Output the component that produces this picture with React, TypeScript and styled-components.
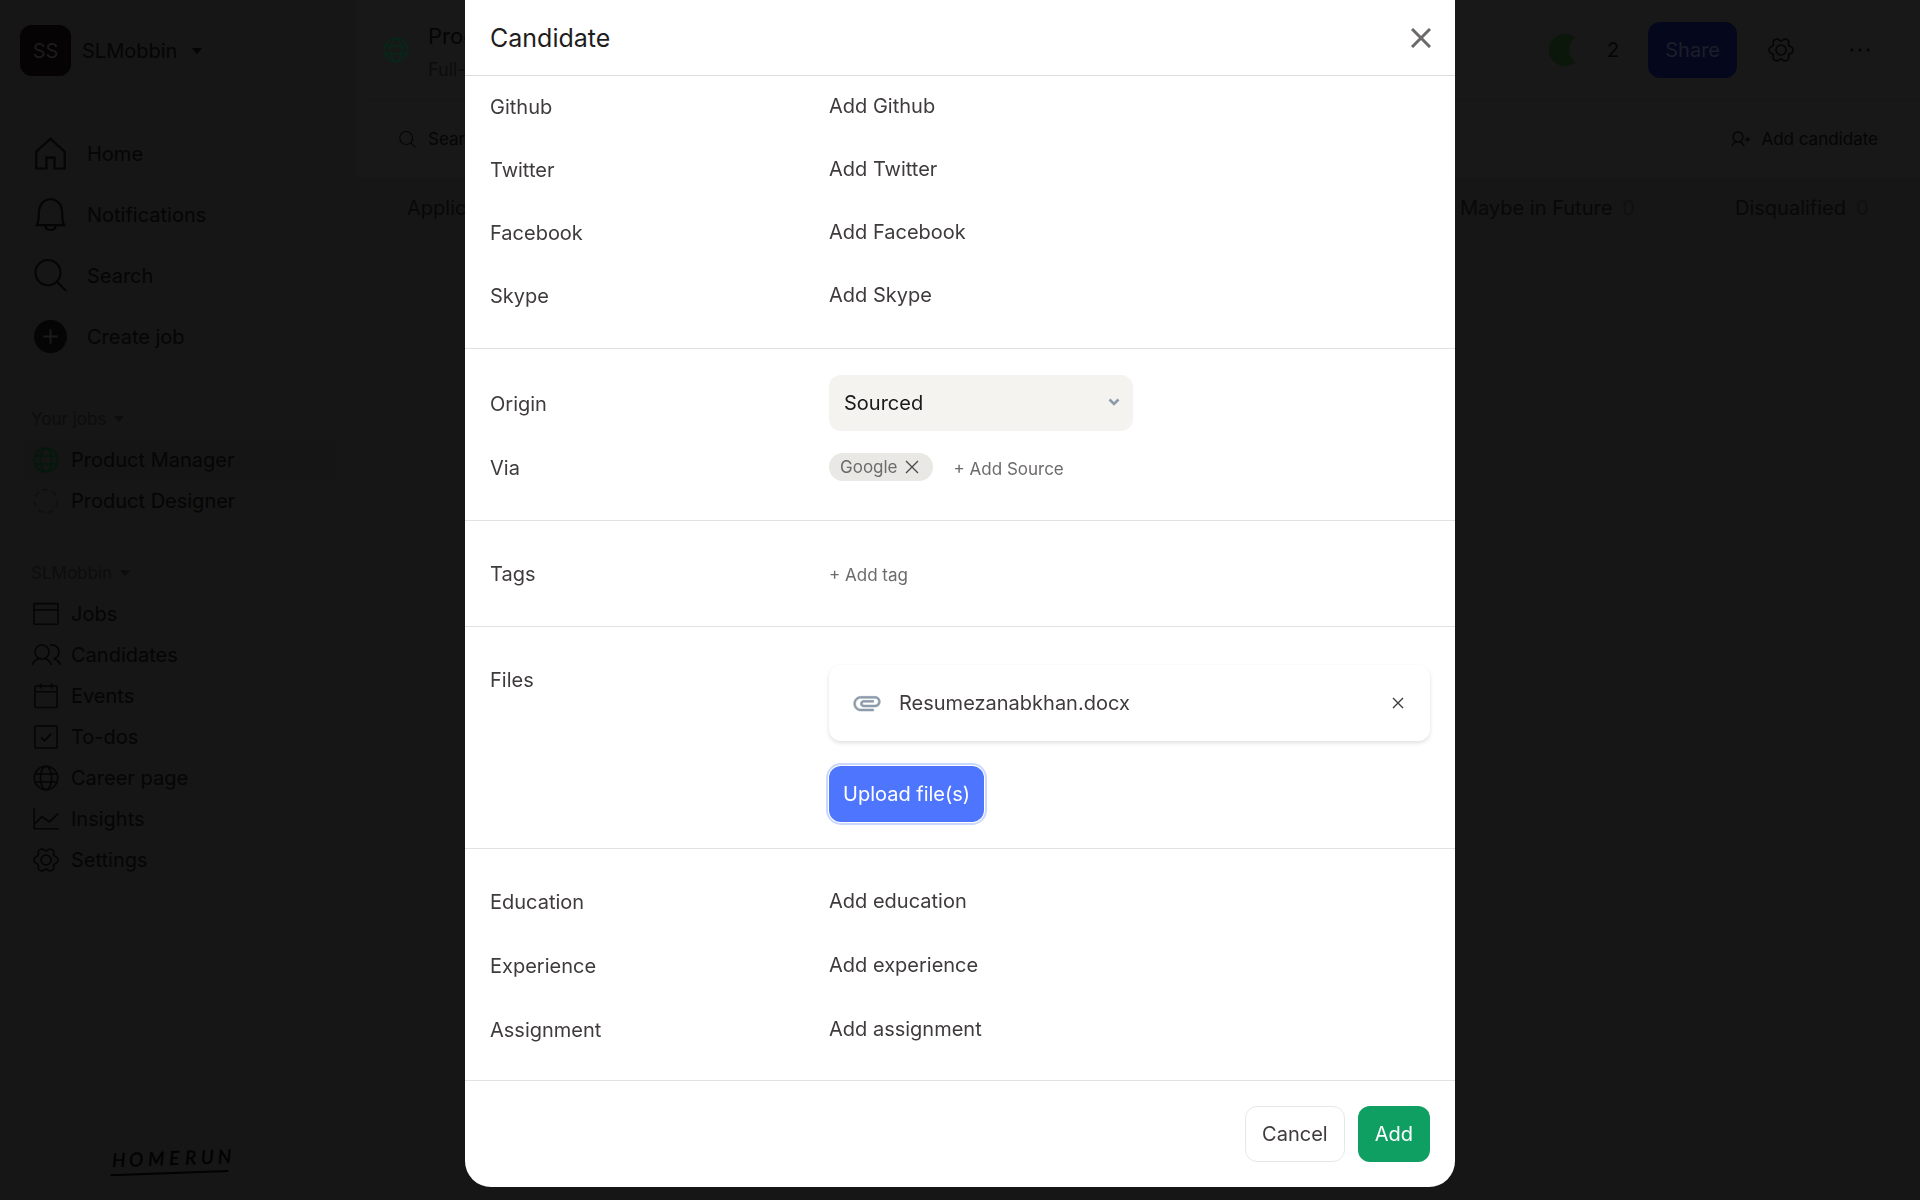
import React, { useState } from "react";
import styled, { createGlobalStyle, css } from "styled-components";

const GlobalStyle = createGlobalStyle`
  *, *::before, *::after { box-sizing: border-box; }
  body {
    margin: 0;
    background: #161616;
    color: #050505;
    font-family: Inter, "Liberation Sans", sans-serif;
    font-size: 20px;
    line-height: 24px;
    overflow: hidden;
  }
  button, select, input { font: inherit; color: inherit; }
  svg { display: block; flex: none; }
`;

/* ---------- shared ---------- */

const plainButton = css`
  border: 0;
  padding: 0;
  background: none;
  cursor: pointer;
  text-align: left;
`;

const PlainButton = styled.button`
  ${plainButton}
  display: flex;
  align-items: center;
`;

/* ---------- page behind the dialog ---------- */

const Page = styled.div`
  display: grid;
  grid-template-columns: 356px 1fr;
  min-height: 100vh;
`;

const Sidebar = styled.aside`
  display: flex;
  flex-direction: column;
  padding: 25px 20px 20px;
`;

const Workspace = styled.button`
  ${plainButton}
  display: flex;
  align-items: center;
  gap: 11px;
  margin-bottom: 47px;
`;

const WorkspaceBadge = styled.span`
  display: grid;
  place-items: center;
  width: 51px;
  height: 51px;
  border-radius: 12px;
  background: #050304;
  color: #1c1c1c;
`;

const Caret = styled.span`
  margin-left: 4px;
  border: 5px solid transparent;
  border-top: 6px solid currentColor;
  border-bottom: 0;
`;

const MainLink = styled.a`
  display: flex;
  align-items: center;
  gap: 20px;
  height: 61px;
  padding-left: 14px;
  color: #050505;
  text-decoration: none;
`;

const GroupTitle = styled.button`
  ${plainButton}
  display: flex;
  align-items: center;
  gap: 4px;
  height: 40px;
  margin-top: 32px;
  padding-left: 11px;
  font-size: 17px;
  color: #0d0d0d;
`;

const SubLink = styled.a<{ $active?: boolean }>`
  display: flex;
  align-items: center;
  gap: 12px;
  height: 41px;
  margin-left: 4px;
  padding-left: 9px;
  border-radius: 8px;
  background: ${(p) => (p.$active ? "#151515" : "transparent")};
  color: #050505;
  text-decoration: none;
`;

const SubIcon = styled.span<{ $color?: string }>`
  display: flex;
  justify-content: center;
  flex: none;
  width: 26px;
  color: ${(p) => p.$color || "inherit"};
`;

const Brand = styled.div`
  margin: auto 0 0 88px;
  color: #020202;
`;

const Main = styled.main`
  min-width: 0;
`;

const TopPanel = styled.header`
  background: #181818;
  height: 177px;
`;

const JobBar = styled.div`
  display: flex;
  align-items: center;
  height: 101px;
  margin-left: 12px;
  padding: 0 46px 0 15px;
  border-bottom: 1px solid #161616;
`;

const JobTitle = styled.div`
  display: flex;
  flex-direction: column;
  gap: 10px;
  margin-left: 19px;
  padding-top: 6px;
  font-size: 22px;
`;

const JobMeta = styled.span`
  font-size: 18px;
  color: #0c0c0c;
`;

const JobActions = styled.div`
  display: flex;
  align-items: center;
  margin-left: auto;
`;

const Avatar = styled.span<{ $color: string }>`
  width: 32px;
  height: 32px;
  border-radius: 50%;
  background: ${(p) => p.$color};
  & + & { margin-left: -12px; }
`;

const MemberCount = styled.span`
  margin: 0 29px 0 6px;
`;

const ShareButton = styled.button`
  ${plainButton}
  height: 56px;
  padding: 0 17px;
  border-radius: 12px;
  background: #05081c;
  color: #1c1e2a;
`;

const IconButton = styled.button`
  ${plainButton}
  display: grid;
  place-items: center;
  width: 28px;
  height: 44px;
`;

const GearSlot = styled.span`
  margin: 0 51px 0 30px;
`;

const ToolBar = styled.div`
  display: flex;
  align-items: center;
  justify-content: space-between;
  height: 76px;
  padding: 0 42px 0 43px;
  font-size: 17px;
`;

const SearchBox = styled.label`
  display: flex;
  align-items: center;
  gap: 12px;
`;

const SearchInput = styled.input`
  width: 200px;
  border: 0;
  padding: 0;
  background: none;
  outline: 0;
  &::placeholder { color: #050505; opacity: 1; }
`;

const AddCandidate = styled(PlainButton)`
  gap: 10px;
`;

const Stages = styled.div`
  display: grid;
  grid-template-columns: 1fr 275px 185px;
  padding: 19px 0 0 51px;
  color: #080808;
`;

const Stage = styled.div`
  display: flex;
  gap: 10px;
`;

const StageCount = styled.span`
  color: #101010;
`;

/* ---------- dialog ---------- */

const Overlay = styled.div`
  position: fixed;
  inset: 0;
  display: flex;
  justify-content: center;
  align-items: flex-start;
`;

const Dialog = styled.section`
  display: flex;
  flex-direction: column;
  width: 100%;
  max-width: 990px;
  max-height: calc(100vh - 13px);
  border-radius: 0 0 26px 26px;
  background: #fff;
  color: #3f3b3c;
`;

const DialogHeader = styled.header`
  display: flex;
  align-items: center;
  justify-content: space-between;
  flex: none;
  height: 76px;
  padding: 0 24px 0 25px;
  border-bottom: 1px solid #dedddc;
`;

const DialogTitle = styled.h2`
  margin: 0;
  font-size: 25px;
  line-height: 32px;
  font-weight: 400;
  color: #1f1d1d;
`;

const DialogBody = styled.div`
  flex: 1;
  min-height: 0;
  overflow-y: auto;
  scrollbar-width: none;
`;

const Section = styled.div<{ $top?: number; $bottom?: number; $gap?: number }>`
  display: flex;
  flex-direction: column;
  gap: ${(p) => p.$gap ?? 20}px;
  padding: ${(p) => p.$top ?? 30}px 25px ${(p) => p.$bottom ?? 31}px;
  & + & { border-top: 1px solid #e2e1e0; }
`;

const Row = styled.div`
  display: grid;
  grid-template-columns: 339px 1fr;
  align-items: center;
  min-height: 44px;
`;

const FilesRow = styled(Row)`
  align-items: start;
`;

const RowLabel = styled.label`
  padding-top: 2px;
  line-height: 42px;
`;

const AddLink = styled(PlainButton)`
  justify-self: start;
`;

const SmallLink = styled(PlainButton)`
  justify-self: start;
  padding-top: 3px;
  font-size: 17px;
  color: #6d6a6a;
`;

const SelectWrap = styled.div`
  position: relative;
  width: 304px;
  svg {
    position: absolute;
    right: 12px;
    top: 20px;
    pointer-events: none;
  }
`;

const Select = styled.select`
  appearance: none;
  width: 100%;
  height: 56px;
  padding: 0 15px;
  border: 0;
  border-radius: 12px;
  background: #f4f3ef;
  color: #1b1919;
  display: block;
`;

const Sources = styled.div`
  display: flex;
  align-items: center;
  gap: 21px;
`;

const Chip = styled.span`
  display: flex;
  align-items: center;
  gap: 7px;
  height: 28px;
  padding: 0 14px 0 11px;
  border-radius: 14px;
  background: #e9e8e5;
  font-size: 17px;
  color: #6d6a6a;
`;

const Files = styled.div`
  display: flex;
  flex-direction: column;
  align-items: flex-start;
  gap: 25px;
  padding-top: 8px;
`;

const FileCard = styled.div`
  display: flex;
  align-items: center;
  width: 100%;
  height: 76px;
  padding: 0 26px 0 22px;
  border-radius: 12px;
  box-shadow: 0 2px 4px rgba(0, 0, 0, 0.13);
`;

const FileName = styled.span`
  flex: 1;
  margin-left: 16px;
`;

const Button = styled.button<{ $kind: "primary" | "outline" | "success" }>`
  height: 56px;
  padding: 0 16px;
  border-radius: 12px;
  border: 1px solid transparent;
  cursor: pointer;
  color: #fff;
  ${(p) =>
    p.$kind === "primary" &&
    css`
      padding: 0 14px;
      background: #4e75fd;
      border: 0;
      box-shadow: 0 0 0 1px #fff, 0 0 0 3px #cbd8fe;
    `}
  ${(p) =>
    p.$kind === "outline" &&
    css`
      background: #fff;
      border-color: #e8e7e5;
      color: #3f3b3c;
    `}
  ${(p) => p.$kind === "success" && css`background: #0f9f63;`}
`;

const DialogFooter = styled.footer`
  display: flex;
  justify-content: flex-end;
  gap: 13px;
  flex: none;
  padding: 25px;
  border-top: 1px solid #e2e1e0;
`;

/* ---------- icons ---------- */

type IconProps = { size?: number; width?: number };

const Icon = ({ size = 26, width = 1.6, children }: IconProps & { children: React.ReactNode }) => (
  <svg width={size} height={size} viewBox="0 0 26 26" fill="none" stroke="currentColor" strokeWidth={width} aria-hidden="true">
    {children}
  </svg>
);

const Globe = (p: IconProps) => (
  <Icon {...p}>
    <circle cx="13" cy="13" r="11.7" />
    <ellipse cx="13" cy="13" rx="5.6" ry="11.7" />
    <path d="M2.2 9h21.6M2.2 17h21.6" />
  </Icon>
);

const gearPath =
  Array.from({ length: 72 }, (_, i) => {
    const a = (i * Math.PI) / 36;
    const wave = Math.cos(6 * a);
    const r = 11 + 1.5 * wave - 0.5 * wave * wave;
    return `${i ? "L" : "M"}${(13 + r * Math.cos(a)).toFixed(2)} ${(13 + r * Math.sin(a)).toFixed(2)}`;
  }).join("") + "Z";

const Gear = (p: IconProps) => (
  <Icon {...p}>
    <path d={gearPath} strokeLinejoin="round" />
    <circle cx="13" cy="13" r="5" />
  </Icon>
);

const Magnifier = (p: IconProps) => (
  <Icon {...p}>
    <circle cx="11" cy="10.7" r="9.9" />
    <path d="M18 18l7.4 7.2" />
  </Icon>
);

const House = () => (
  <Icon size={33} width={1.7}>
    <path d="M1.800 24.800V11.600L13 1.400l11.200 10.200v13.200h-8v-8.600H9.800v8.600z" />
  </Icon>
);

const Bell = () => (
  <Icon size={33} width={1.7}>
    <path d="M2.200 21.400c1.200-2 1.600-4.400 1.600-9.400 0-6.200 3.500-11 9.200-11s9.200 4.800 9.200 11c0 5 .4 7.400 1.600 9.400z" />
    <path d="M8.800 21.600c.4 2.500 2 3.700 4.200 3.700s3.800-1.200 4.200-3.700" />
  </Icon>
);

const PlusDisc = () => (
  <svg width={33} height={33} viewBox="0 0 32 32" aria-hidden="true">
    <circle cx="16" cy="16" r="16" fill="#050505" />
    <path d="M16 9v14M9 16h14" stroke="#1a1a1a" strokeWidth="2" />
  </svg>
);

const Dashed = () => (
  <Icon>
    <circle cx="13" cy="13" r="11.500" strokeDasharray="6 4" />
  </Icon>
);

const Window = () => (
  <Icon>
    <rect x="1" y="2.600" width="24" height="20.600" rx="1" />
    <path d="M1 8.800h24" />
  </Icon>
);

const People = () => (
  <svg width={32} height={26} viewBox="0 0 32 26" fill="none" stroke="currentColor" strokeWidth="1.600" aria-hidden="true">
    <circle cx="12" cy="10" r="7" />
    <path d="M2 23c1.600-3.500 4-5.600 7-6.600M15 16.400c3 1 5 3.100 6.600 6.600" />
    <path d="M20 3.300c5-1.500 9 2 9 6.700 0 3.400-2.200 6-5.400 6.700 3.400.9 5.600 3 7.200 6.300" />
  </svg>
);

const Calendar = () => (
  <Icon>
    <rect x="2" y="3" width="22" height="21.500" rx="1" />
    <path d="M2 8.800h22M7.600.6v5M18.600.6v5" />
  </Icon>
);

const CheckBoxIcon = () => (
  <Icon>
    <rect x="2" y="2" width="22" height="22" rx="1" />
    <path d="M8 13.200l3.600 3.600 6.600-7.200" />
  </Icon>
);

const Chart = () => (
  <Icon>
    <path d="M1.200 2.500v20.300H26M2 17.500l7-7 7.400 5.400 9-8.400" />
  </Icon>
);

const PersonPlus = () => (
  <svg width={20} height={16} viewBox="0 0 20 16" fill="none" stroke="currentColor" strokeWidth="1.300" aria-hidden="true">
    <circle cx="7" cy="6" r="5" />
    <path d="M.8 15c1-2.300 2.600-3.800 4.600-4.400M8.600 10.600c2 .6 3.600 2.100 4.600 4.400M16.500 6v5M14 8.500h5" />
  </svg>
);

const Dots = () => (
  <svg width={20} height={4} viewBox="0 0 20 4" fill="currentColor" aria-hidden="true">
    <circle cx="1.800" cy="2" r="1.500" />
    <circle cx="10" cy="2" r="1.500" />
    <circle cx="18.200" cy="2" r="1.500" />
  </svg>
);

const Cross = ({ size, width, color }: { size: number; width: number; color: string }) => (
  <svg width={size} height={size} viewBox={`0 0 ${size} ${size}`} stroke={color} strokeWidth={width} aria-hidden="true">
    <path d={`M1 1L${size - 1} ${size - 1}M${size - 1} 1L1 ${size - 1}`} />
  </svg>
);

const Clip = () => (
  <svg width={32} height={32} viewBox="0 0 24 24" fill="#8c9cab" stroke="#8c9cab" strokeWidth=".4" aria-hidden="true">
    <path d="M2 12.500C2 9.460 4.460 7 7.500 7H18c2.210 0 4 1.790 4 4s-1.790 4-4 4H9.500C8.120 15 7 13.880 7 12.500S8.120 10 9.500 10H17v1.500H9.410c-.9 0-.9 2 0 2H18c1.380 0 2.500-1.120 2.500-2.500S19.380 8.500 18 8.500H7.500c-2.210 0-4 1.790-4 4s1.790 4 4 4H17V18H7.500C4.460 18 2 15.540 2 12.500z" />
  </svg>
);

const Wordmark = () => (
  <svg width={128} height={38} viewBox="0 0 128 38" role="img" aria-label="Homerun">
    <g transform="rotate(-2 64 19)" fill="currentColor">
      <text x="4 21 40 61 77 93 110" y="23" fontFamily="Lato, sans-serif" fontSize="19" fontStyle="italic" fontWeight="400" stroke="currentColor" strokeWidth=".4">
        HOMERUN
      </text>
      <rect x="2" y="30" width="118" height="2" />
    </g>
  </svg>
);

/* ---------- content ---------- */

const companyLinks = [
  { name: "Jobs", icon: <Window /> },
  { name: "Candidates", icon: <People /> },
  { name: "Events", icon: <Calendar /> },
  { name: "To-dos", icon: <CheckBoxIcon /> },
  { name: "Career page", icon: <Globe /> },
  { name: "Insights", icon: <Chart /> },
  { name: "Settings", icon: <Gear /> },
];

const socials = ["Github", "Twitter", "Facebook", "Skype"];
const background = ["Education", "Experience", "Assignment"];

const Field = ({ name, action }: { name: string; action: string }) => (
  <Row>
    <RowLabel htmlFor={name}>{name}</RowLabel>
    <AddLink id={name} type="button">{action}</AddLink>
  </Row>
);

export default function App() {
  const [origin, setOrigin] = useState("Sourced");

  return (
    <>
      <GlobalStyle />
      <Page>
        <Sidebar>
          <Workspace type="button">
            <WorkspaceBadge>SS</WorkspaceBadge>
            <span>SLMobbin</span>
            <Caret />
          </Workspace>
          <nav>
            <MainLink href="#home"><House />Home</MainLink>
            <MainLink href="#notifications"><Bell />Notifications</MainLink>
            <MainLink href="#search"><Magnifier size={33} />Search</MainLink>
            <MainLink href="#create"><PlusDisc />Create job</MainLink>
            <GroupTitle type="button">Your jobs<Caret /></GroupTitle>
            <SubLink href="#manager" $active><SubIcon $color="#03190d"><Globe /></SubIcon>Product Manager</SubLink>
            <SubLink href="#designer"><SubIcon $color="#101010"><Dashed /></SubIcon>Product Designer</SubLink>
            <GroupTitle type="button">SLMobbin<Caret /></GroupTitle>
            {companyLinks.map((link) => (
              <SubLink key={link.name} href={`#${link.name}`}>
                <SubIcon>{link.icon}</SubIcon>
                {link.name}
              </SubLink>
            ))}
          </nav>
          <Brand><Wordmark /></Brand>
        </Sidebar>

        <Main>
          <TopPanel>
            <JobBar>
              <SubIcon $color="#06281a"><Globe /></SubIcon>
              <JobTitle>
                Product Manager
                <JobMeta>Full-time</JobMeta>
              </JobTitle>
              <JobActions>
                <Avatar $color="#0b170b" />
                <Avatar $color="#181818" />
                <MemberCount>2</MemberCount>
                <ShareButton type="button">Share</ShareButton>
                <GearSlot><IconButton type="button" aria-label="Job settings"><Gear /></IconButton></GearSlot>
                <IconButton type="button" aria-label="More"><Dots /></IconButton>
              </JobActions>
            </JobBar>
            <ToolBar>
              <SearchBox>
                <Magnifier size={17} />
                <SearchInput type="text" placeholder="Search" aria-label="Search candidates" />
              </SearchBox>
              <AddCandidate type="button"><PersonPlus />Add candidate</AddCandidate>
            </ToolBar>
          </TopPanel>
          <Stages>
            <Stage>Application</Stage>
            <Stage>Maybe in Future<StageCount>0</StageCount></Stage>
            <Stage>Disqualified<StageCount>0</StageCount></Stage>
          </Stages>
        </Main>
      </Page>

      <Overlay>
        <Dialog role="dialog" aria-labelledby="dialog-title">
          <DialogHeader>
            <DialogTitle id="dialog-title">Candidate</DialogTitle>
            <PlainButton type="button" aria-label="Close"><Cross size={20} width={3} color="#6b6969" /></PlainButton>
          </DialogHeader>
          <DialogBody>
            <Section $top={8} $gap={19}>
              {socials.map((name) => <Field key={name} name={name} action={`Add ${name}`} />)}
            </Section>
            <Section $top={26} $gap={14}>
              <Row>
                <RowLabel htmlFor="origin">Origin</RowLabel>
                <SelectWrap>
                  <Select id="origin" value={origin} onChange={(e) => setOrigin(e.target.value)}>
                    <option>Sourced</option>
                    <option>Applied</option>
                  </Select>
                  <svg width="14" height="14" viewBox="0 0 14 14" fill="none" stroke="#8c9cab" strokeWidth="2.600" aria-hidden="true">
                    <path d="M2.500 4.500L7 9l4.500-4.500" />
                  </svg>
                </SelectWrap>
              </Row>
              <Row>
                <RowLabel htmlFor="via">Via</RowLabel>
                <Sources>
                  <Chip>
                    Google
                    <PlainButton type="button" aria-label="Remove Google"><Cross size={14} width={1.3} color="#4a4747" /></PlainButton>
                  </Chip>
                  <SmallLink id="via" type="button">+ Add Source</SmallLink>
                </Sources>
              </Row>
            </Section>
            <Section>
              <Row>
                <RowLabel htmlFor="tags">Tags</RowLabel>
                <SmallLink id="tags" type="button">+ Add tag</SmallLink>
              </Row>
            </Section>
            <Section $bottom={26}>
              <FilesRow>
                <RowLabel htmlFor="files">Files</RowLabel>
                <Files>
                  <FileCard>
                    <Clip />
                    <FileName>Resumezanabkhan.docx</FileName>
                    <PlainButton type="button" aria-label="Remove file"><Cross size={12} width={1.4} color="#3f3b3c" /></PlainButton>
                  </FileCard>
                  <Button id="files" type="button" $kind="primary">Upload file(s)</Button>
                </Files>
              </FilesRow>
            </Section>
            <Section>
              {background.map((name) => <Field key={name} name={name} action={`Add ${name.toLowerCase()}`} />)}
            </Section>
          </DialogBody>
          <DialogFooter>
            <Button type="button" $kind="outline">Cancel</Button>
            <Button type="button" $kind="success">Add</Button>
          </DialogFooter>
        </Dialog>
      </Overlay>
    </>
  );
}
